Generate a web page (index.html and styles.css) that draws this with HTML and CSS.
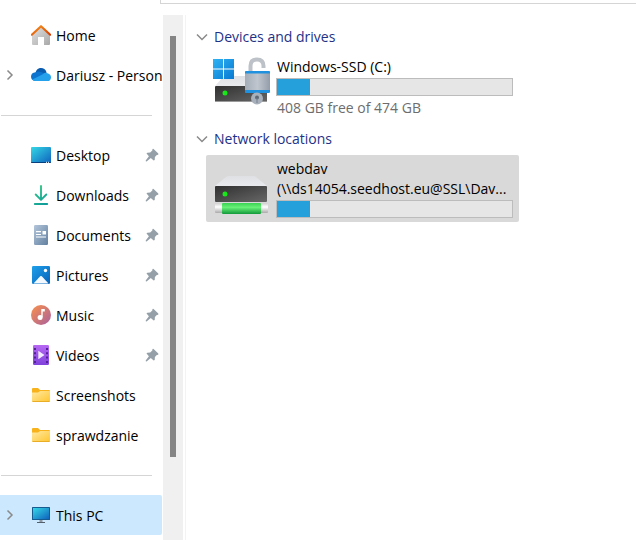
FILE: index.html
```html
<!DOCTYPE html>
<html lang="en">
<head>
<meta charset="utf-8">
<meta name="viewport" content="width=device-width, initial-scale=1">
<title>This PC</title>
<link rel="stylesheet" href="styles.css">
</head>
<body>
<svg class="defs" width="0" height="0" aria-hidden="true">
  <defs>
    <linearGradient id="roof" x1="0" y1="0" x2="1" y2="1"><stop offset="0" stop-color="#f7961e"/><stop offset="1" stop-color="#d83b01"/></linearGradient>
    <linearGradient id="wall" x1="0" y1="0" x2="1" y2="1"><stop offset="0" stop-color="#e3e3e3"/><stop offset="1" stop-color="#a8a8a8"/></linearGradient>
    <linearGradient id="screen" x1="0" y1="0" x2="1" y2="1"><stop offset="0" stop-color="#34d8e6"/><stop offset="1" stop-color="#0f62bd"/></linearGradient>
    <linearGradient id="arrow" gradientUnits="userSpaceOnUse" x1="4" y1="1" x2="16" y2="19"><stop offset="0" stop-color="#35cc85"/><stop offset="1" stop-color="#0f9b9c"/></linearGradient>
    <linearGradient id="paper" x1="0" y1="0" x2="1" y2="1"><stop offset="0" stop-color="#b3c6da"/><stop offset="1" stop-color="#6280a1"/></linearGradient>
    <linearGradient id="photo" x1="0" y1="0" x2="1" y2="1"><stop offset="0" stop-color="#1ea1ea"/><stop offset="1" stop-color="#0761b8"/></linearGradient>
    <linearGradient id="disc" x1="0" y1="0" x2="1" y2="1"><stop offset="0.1" stop-color="#f28c52"/><stop offset="1" stop-color="#a9609f"/></linearGradient>
    <linearGradient id="film" x1="0" y1="0" x2="0" y2="1"><stop offset="0" stop-color="#b668f2"/><stop offset="1" stop-color="#8042dc"/></linearGradient>
    <linearGradient id="folder" x1="0" y1="0" x2="1" y2="1"><stop offset="0" stop-color="#ffe9a3"/><stop offset="1" stop-color="#ffc62f"/></linearGradient>
    <linearGradient id="lid" x1="0" y1="0" x2="0" y2="1"><stop offset="0" stop-color="#dfe0e3"/><stop offset="1" stop-color="#e8eaee"/></linearGradient>
    <linearGradient id="front" x1="0" y1="0" x2="1" y2="1"><stop offset="0" stop-color="#303030"/><stop offset="1" stop-color="#676767"/></linearGradient>
    <linearGradient id="win" x1="0" y1="0" x2="1" y2="1"><stop offset="0" stop-color="#2fb2f3"/><stop offset="1" stop-color="#0879d2"/></linearGradient>
    <linearGradient id="steel" x1="0" y1="0" x2="1" y2="0"><stop offset="0" stop-color="#a3acb8"/><stop offset=".5" stop-color="#c0c6ce"/><stop offset="1" stop-color="#939daa"/></linearGradient>
    <linearGradient id="pipe" x1="0" y1="0" x2="0" y2="1"><stop offset="0" stop-color="#39d252"/><stop offset=".4" stop-color="#68f078"/><stop offset="1" stop-color="#12993a"/></linearGradient>
    <linearGradient id="cap" x1="0" y1="0" x2="0" y2="1"><stop offset="0" stop-color="#cfcfcf"/><stop offset=".4" stop-color="#fff"/><stop offset="1" stop-color="#aaa"/></linearGradient>
    <symbol id="pin" viewBox="0 0 14 14"><path d="M8.300.7 13.300 5.500v1.200l-1.500.3-1.900 2.100-.2 2.800-1 .7-2.900-2.500L1.600 13.400.8 13.300.7 12.500 3.900 8.300 1.500 5.600l.8-.9 2.900-.2 2.100-1.900.2-1.500z" fill="#949fa8"/></symbol>
    <symbol id="folder-icon" viewBox="0 0 20 20"><path d="M1 4q0-1 1-1h5l2 2h9q1 0 1 1v3H1z" fill="#f8b21b"/><path d="M1 7.500h6l2-1.500h10v10q0 1-1 1H2q-1 0-1-1z" fill="url(#folder)"/><path d="M1.500 16.500h17" stroke="#e9ae25"/></symbol>
  </defs>
</svg>

<div class="window">
  <header class="topbar"><div class="topbar-edge"></div></header>
  <div class="body">
    <nav class="sidebar" aria-label="Folders">
      <a class="item" href="#"><span class="expander"></span>
        <svg class="icon" viewBox="0 0 20 20"><path d="M1 9.500 10 1l9 8.500V19q0 1-1 1h-5v-8H7v8H2q-1 0-1-1z" fill="url(#wall)"/><path d="m.8 9.700 9.200-8.500 9.200 8.500" fill="none" stroke="url(#roof)" stroke-width="2.200" stroke-linejoin="round" stroke-linecap="round"/></svg>
        <span class="label">Home</span></a>
      <a class="item" href="#"><span class="expander"><svg viewBox="0 0 8 12"><path d="m1.500 1.500 4.500 4.500-4.500 4.500"/></svg></span>
        <svg class="icon" viewBox="0 0 20 20"><path d="M4.500 8.200C5.200 1.800 14 1.300 15.600 7.500L12 13z" fill="#0a5cb0"/><path d="M4.600 7.300Q0 7.600 0 11.800q.2 3.200 3.500 4.200L15 8.800 8 6.600Q6.200 6.400 4.600 7.300" fill="#0c74cf"/><path d="M3.500 16q-1.300-.3-2.200-1.400l10.600-5.400Q14 7 16.500 8.200 20 9.200 20 12.400 19.700 16 16.500 16z" fill="#24a1ea"/></svg>
        <span class="label">Dariusz - Person</span></a>
      <hr class="divider">
      <a class="item" href="#"><span class="expander"></span>
        <svg class="icon" viewBox="0 0 20 20"><rect y="2" width="20" height="16" rx="1" fill="url(#screen)"/><path d="M0 17h20q0 1-1 1H1q-1 0-1-1z" fill="#07407e"/><path d="M15 17.300h1m1 0h1" stroke="#fff"/></svg>
        <span class="label">Desktop</span><svg class="pin"><use href="#pin"/></svg></a>
      <a class="item" href="#"><span class="expander"></span>
        <svg class="icon" viewBox="0 0 20 20"><path d="M10 1v13M4.700 9.500 10 14.800l5.300-5.300M3.800 19h12.400" fill="none" stroke="url(#arrow)" stroke-width="1.900" stroke-linecap="round" stroke-linejoin="round"/></svg>
        <span class="label">Downloads</span><svg class="pin"><use href="#pin"/></svg></a>
      <a class="item" href="#"><span class="expander"></span>
        <svg class="icon" viewBox="0 0 20 20"><rect x="3" width="14" height="20" rx="1.200" fill="url(#paper)"/><path d="M5 6.700h5M5 9.500h5M5 12h10" stroke="#fff" stroke-width="1.200"/><rect x="11.500" y="6" width="3.500" height="3.500" fill="#fff"/></svg>
        <span class="label">Documents</span><svg class="pin"><use href="#pin"/></svg></a>
      <a class="item" href="#"><span class="expander"></span>
        <svg class="icon" viewBox="0 0 20 20"><rect x="1" y="1" width="18" height="18" rx="1.200" fill="url(#photo)"/><path d="m2.500 18.500 6.700-7.200q.8-.7 1.600 0l6.700 7.200z" fill="#f4f9ff"/><circle cx="14.500" cy="5.500" r="1.700" fill="#fff"/></svg>
        <span class="label">Pictures</span><svg class="pin"><use href="#pin"/></svg></a>
      <a class="item" href="#"><span class="expander"></span>
        <svg class="icon" viewBox="0 0 20 20"><circle cx="10" cy="10" r="10" fill="url(#disc)"/><path d="M10.300 4h3.500v2.500h-2.100v5.800h-1.400z" fill="#fff"/><circle cx="9.100" cy="12.600" r="2.500" fill="#fff"/></svg>
        <span class="label">Music</span><svg class="pin"><use href="#pin"/></svg></a>
      <a class="item" href="#"><span class="expander"></span>
        <svg class="icon" viewBox="0 0 20 20"><rect x="2" width="16" height="20" rx="1.200" fill="url(#film)"/><path d="M4 3v15M16 3v15" stroke="#542098" stroke-width="2" stroke-dasharray="2 2.300"/><path d="m7.300 5.700 6.200 4.300-6.200 4.300z" fill="#f2eaff"/></svg>
        <span class="label">Videos</span><svg class="pin"><use href="#pin"/></svg></a>
      <a class="item" href="#"><span class="expander"></span>
        <svg class="icon"><use href="#folder-icon"/></svg><span class="label">Screenshots</span></a>
      <a class="item" href="#"><span class="expander"></span>
        <svg class="icon"><use href="#folder-icon"/></svg><span class="label">sprawdzanie</span></a>
      <hr class="divider">
      <a class="item selected" href="#" aria-current="page"><span class="expander"><svg viewBox="0 0 8 12"><path d="m1.500 1.500 4.500 4.500-4.500 4.500"/></svg></span>
        <svg class="icon" viewBox="0 0 20 20"><path d="M8.500 14h3v3h-3z" fill="#909ba5"/><path d="M6 17.500h8" stroke="#53606b"/><rect x="1" y="2" width="18" height="13" rx=".5" fill="#135b91"/><rect x="2" y="3" width="16" height="11" fill="url(#screen)"/></svg>
        <span class="label">This PC</span></a>
    </nav>
    <div class="scrollbar"><div class="thumb"></div></div>
    <main class="content">
      <section>
        <h2 class="group"><svg viewBox="0 0 12 8"><path d="m1 1.500 5 5 5-5"/></svg>Devices and drives</h2>
        <article class="drive">
          <svg class="drive-icon" viewBox="0 0 58 50">
            <path d="M11 19h37l6 10H2z" fill="url(#lid)"/>
            <rect x="2" y="29" width="52" height="16" rx="1" fill="url(#front)"/><path d="M2 44.500h52" stroke="#9a9a9a"/>
            <circle cx="12" cy="36" r="2.500" fill="#18e718"/>
            <path d="M0 2h10v9.500H0zm11 0h10v9.500H11zM0 12.500h10V22H0zm11 0h10V22H11z" fill="url(#win)"/>
            <path d="M37.500 16V9q0-6.500 6.500-6.500T50.500 9v2" fill="none" stroke="#bdc2c8" stroke-width="4"/>
            <rect x="32" y="14" width="25" height="22" rx="2" fill="url(#steel)"/>
            <path d="M32 16.500V15q0-1 1-1h23q1 0 1 1v1.500zM32 33h25v1.500q0 1.500-1.500 1.500h-22Q32 36 32 34.500z" fill="#1f91df"/>
            <circle cx="44" cy="41.500" r="6" fill="#a7b0bb"/><circle cx="44" cy="40.500" r="2" fill="#5d6975"/><path d="M44 41v5" stroke="#75818e"/>
          </svg>
          <div class="details">
            <div class="name">Windows-SSD (C:)</div>
            <progress class="usage" aria-label="Space used on C" value="14" max="100"></progress>
            <div class="free">408 GB free of 474 GB</div>
          </div>
        </article>
      </section>
      <section>
        <h2 class="group"><svg viewBox="0 0 12 8"><path d="m1 1.500 5 5 5-5"/></svg>Network locations</h2>
        <article class="drive active">
          <svg class="drive-icon" viewBox="0 4 58 50">
            <path d="M16 12h24q2 0 3 1l11 9H2l11-9q1-1 3-1" fill="url(#lid)"/>
            <rect x="2" y="22" width="52" height="16" rx="1" fill="url(#front)"/>
            <circle cx="12" cy="30" r="2.500" fill="#18e718"/>
            <rect x="2" y="39" width="53" height="10" rx="1" fill="url(#cap)"/>
            <rect x="9" y="39" width="39" height="11" rx="1" fill="url(#pipe)"/>
          </svg>
          <div class="details">
            <div class="name">webdav<br>(\\ds14054.seedhost.eu@SSL\Dav...</div>
            <progress class="usage" aria-label="Space used on webdav" value="14" max="100"></progress>
          </div>
        </article>
      </section>
    </main>
  </div>
</div>
</body>
</html>
```

FILE: styles.css
```css
* {
  box-sizing: border-box;
}

body {
  margin: 0;
  background: #fff;
  color: #000;
  font: 14px/20px "Segoe UI", "Open Sans", "Noto Sans", sans-serif;
}

.defs {
  position: absolute;
}

.window {
  display: flex;
  flex-direction: column;
  min-height: 100vh;
}

.topbar {
  height: 15px;
  padding-left: 160px;
}

.topbar-edge {
  height: 4px;
  border: solid #d5d5d5;
  border-width: 0 0 1px 1px;
}

.body {
  display: flex;
  flex: 1;
}

.sidebar {
  width: 162px;
  flex: none;
}

.item {
  display: flex;
  align-items: center;
  height: 40px;
  padding-left: 6px;
  color: inherit;
  text-decoration: none;
}

.item.selected {
  background: #cce8ff;
  border-radius: 0 2px 2px 0;
}

.expander {
  display: flex;
  flex: none;
  width: 25px;
}

.expander svg {
  width: 8px;
  height: 12px;
}

.expander path,
.group path {
  fill: none;
  stroke: #8a8a8a;
  stroke-width: 1.5;
}

.icon {
  flex: none;
  width: 20px;
  height: 20px;
  margin-right: 5px;
}

.label {
  flex: 1;
  padding-top: 2px;
  white-space: nowrap;
}

.pin {
  flex: none;
  width: 14px;
  height: 14px;
  margin-right: 3px;
}

.divider {
  height: 1px;
  margin: 20px 10px 19px 1px;
  border: 0;
  background: #d5d5d5;
}

.scrollbar {
  flex: none;
  width: 20px;
  margin-left: 1px;
  padding: 21px 7px 0;
  background: #f0f0f0;
}

.thumb {
  height: 421px;
  background: #858585;
}

.content {
  flex: 1;
  min-width: 0;
  margin-left: 2px;
  padding: 12px 20px 0;
  border-left: 1px solid #f3f3f3;
}

.group {
  display: flex;
  align-items: center;
  gap: 6px;
  margin: 0 0 6px -10px;
  color: #1e3287;
  font-size: 14px;
  font-weight: 400;
}

.group svg {
  width: 12px;
  height: 8px;
}

.drive {
  display: flex;
  gap: 5px;
  max-width: 313px;
  margin-bottom: 7px;
  padding: 4px 6px;
  border-radius: 2px;
}

.drive.active {
  align-items: flex-end;
  background: #d9d9d9;
}

.drive-icon {
  flex: none;
  width: 58px;
  height: 50px;
  margin-left: 1px;
}

.details {
  flex: 1;
  min-width: 0;
}

.name,
.free {
  padding-left: 1px;
  white-space: nowrap;
}

.free {
  margin-top: 2px;
  color: #6d6d6d;
}

.usage {
  display: block;
  width: 100%;
  height: 18px;
  margin-top: 1px;
  border: 1px solid #bcbcbc;
  background: #e6e6e6;
  appearance: none;
}

.usage::-webkit-progress-bar {
  background: #e6e6e6;
}

.usage::-webkit-progress-value {
  background: #26a0da;
}
```
